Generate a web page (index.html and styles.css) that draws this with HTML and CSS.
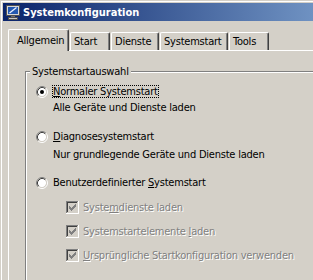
FILE: index.html
```html
<!DOCTYPE html>
<html lang="de">
<head>
<meta charset="utf-8">
<title>Systemkonfiguration</title>
<link rel="stylesheet" href="styles.css">
</head>
<body>
<div class="window">
  <div class="titlebar">
    <svg class="app-icon" width="16" height="16" viewBox="0 0 16 16">
      <rect x="1.5" y="1.5" width="13" height="10" fill="#d8d8d8" stroke="#505050"/>
      <rect x="3" y="3" width="10" height="7" fill="#2358b0"/>
      <path d="M4.5 9 L11.5 3.5" stroke="#e8f0ff" stroke-width="1.3"/>
      <rect x="6" y="12" width="4" height="1" fill="#707070"/>
      <rect x="3.5" y="13.5" width="9" height="2" fill="#c8c8c8" stroke="#505050"/>
    </svg>
    <span class="title">Systemkonfiguration</span>
  </div>
  <div class="client">
    <div class="tabs">
      <div class="tab tab-allgemein is-active">Allgemein</div>
      <div class="tab tab-start">Start</div>
      <div class="tab tab-dienste">Dienste</div>
      <div class="tab tab-systemstart">Systemstart</div>
      <div class="tab tab-tools">Tools</div>
    </div>
    <div class="panel">
      <fieldset class="group">
        <legend class="group-title">Systemstartauswahl</legend>
        <div class="option option-normal">
          <svg class="radio" width="12" height="12" viewBox="0 0 12 12">
            <circle cx="6" cy="6" r="4.2" fill="#fff"/>
            <path d="M2.11 9.89A5.5 5.5 0 0 1 9.89 2.11" fill="none" stroke="#808080"/>
            <path d="M9.89 2.11A5.5 5.5 0 0 1 2.11 9.89" fill="none" stroke="#fff"/>
            <path d="M2.82 9.18A4.5 4.5 0 0 1 9.18 2.82" fill="none" stroke="#404040"/>
            <path d="M9.18 2.82A4.5 4.5 0 0 1 2.82 9.18" fill="none" stroke="#d4d0c8"/>
            <circle cx="6" cy="6" r="2" fill="#000"/>
          </svg>
          <span class="label is-focused"><u>N</u>ormaler Systemstart</span>
        </div>
        <div class="desc desc-normal">Alle Geräte und Dienste laden</div>
        <div class="option option-diag">
          <svg class="radio" width="12" height="12" viewBox="0 0 12 12">
            <circle cx="6" cy="6" r="4.2" fill="#fff"/>
            <path d="M2.11 9.89A5.5 5.5 0 0 1 9.89 2.11" fill="none" stroke="#808080"/>
            <path d="M9.89 2.11A5.5 5.5 0 0 1 2.11 9.89" fill="none" stroke="#fff"/>
            <path d="M2.82 9.18A4.5 4.5 0 0 1 9.18 2.82" fill="none" stroke="#404040"/>
            <path d="M9.18 2.82A4.5 4.5 0 0 1 2.82 9.18" fill="none" stroke="#d4d0c8"/>
          </svg>
          <span class="label"><u>D</u>iagnosesystemstart</span>
        </div>
        <div class="desc desc-diag">Nur grundlegende Geräte und Dienste laden</div>
        <div class="option option-custom">
          <svg class="radio" width="12" height="12" viewBox="0 0 12 12">
            <circle cx="6" cy="6" r="4.2" fill="#fff"/>
            <path d="M2.11 9.89A5.5 5.5 0 0 1 9.89 2.11" fill="none" stroke="#808080"/>
            <path d="M9.89 2.11A5.5 5.5 0 0 1 2.11 9.89" fill="none" stroke="#fff"/>
            <path d="M2.82 9.18A4.5 4.5 0 0 1 9.18 2.82" fill="none" stroke="#404040"/>
            <path d="M9.18 2.82A4.5 4.5 0 0 1 2.82 9.18" fill="none" stroke="#d4d0c8"/>
          </svg>
          <span class="label">Benutzerdefinierter <u>S</u>ystemstart</span>
        </div>
        <div class="check check-first">
          <svg class="checkbox" width="13" height="13" viewBox="0 0 13 13">
            <rect x="0" y="0" width="13" height="13" fill="#fff"/>
            <rect x="0" y="0" width="12" height="12" fill="#808080"/>
            <rect x="1" y="1" width="11" height="11" fill="#d4d0c8"/>
            <rect x="1" y="1" width="10" height="10" fill="#404040"/>
            <rect x="2" y="2" width="9" height="9" fill="#d4d0c8"/>
            <g fill="#808080">
              <rect x="9" y="3" width="1" height="1"/>
              <rect x="8" y="4" width="2" height="1"/>
              <rect x="3" y="5" width="1" height="1"/>
              <rect x="7" y="5" width="3" height="1"/>
              <rect x="3" y="6" width="2" height="1"/>
              <rect x="6" y="6" width="3" height="1"/>
              <rect x="3" y="7" width="5" height="1"/>
              <rect x="4" y="8" width="3" height="1"/>
              <rect x="5" y="9" width="1" height="1"/>
            </g>
          </svg>
          <span class="label is-disabled">Syste<u>m</u>dienste laden</span>
        </div>
        <div class="check">
          <svg class="checkbox" width="13" height="13" viewBox="0 0 13 13">
            <rect x="0" y="0" width="13" height="13" fill="#fff"/>
            <rect x="0" y="0" width="12" height="12" fill="#808080"/>
            <rect x="1" y="1" width="11" height="11" fill="#d4d0c8"/>
            <rect x="1" y="1" width="10" height="10" fill="#404040"/>
            <rect x="2" y="2" width="9" height="9" fill="#d4d0c8"/>
            <g fill="#808080">
              <rect x="9" y="3" width="1" height="1"/>
              <rect x="8" y="4" width="2" height="1"/>
              <rect x="3" y="5" width="1" height="1"/>
              <rect x="7" y="5" width="3" height="1"/>
              <rect x="3" y="6" width="2" height="1"/>
              <rect x="6" y="6" width="3" height="1"/>
              <rect x="3" y="7" width="5" height="1"/>
              <rect x="4" y="8" width="3" height="1"/>
              <rect x="5" y="9" width="1" height="1"/>
            </g>
          </svg>
          <span class="label is-disabled">Systemstartelemente <u>l</u>aden</span>
        </div>
        <div class="check">
          <svg class="checkbox" width="13" height="13" viewBox="0 0 13 13">
            <rect x="0" y="0" width="13" height="13" fill="#fff"/>
            <rect x="0" y="0" width="12" height="12" fill="#808080"/>
            <rect x="1" y="1" width="11" height="11" fill="#d4d0c8"/>
            <rect x="1" y="1" width="10" height="10" fill="#404040"/>
            <rect x="2" y="2" width="9" height="9" fill="#d4d0c8"/>
            <g fill="#808080">
              <rect x="9" y="3" width="1" height="1"/>
              <rect x="8" y="4" width="2" height="1"/>
              <rect x="3" y="5" width="1" height="1"/>
              <rect x="7" y="5" width="3" height="1"/>
              <rect x="3" y="6" width="2" height="1"/>
              <rect x="6" y="6" width="3" height="1"/>
              <rect x="3" y="7" width="5" height="1"/>
              <rect x="4" y="8" width="3" height="1"/>
              <rect x="5" y="9" width="1" height="1"/>
            </g>
          </svg>
          <span class="label is-disabled"><u>U</u>rsprüngliche Startkonfiguration verwenden</span>
        </div>
      </fieldset>
    </div>
  </div>
</div>
</body>
</html>
```

FILE: styles.css
```css
html, body {
  margin: 0;
  padding: 0;
  overflow: hidden;
  background: #d4d0c8;
}

body {
  width: 313px;
  height: 280px;
  font-family: "DejaVu Sans Condensed", "Liberation Sans", sans-serif;
  font-size: 11px;
  line-height: 13px;
  letter-spacing: -0.22px;
  color: #000;
}

/* window is cropped by the screenshot: only top and left frame edges show */
.window {
  width: 313px;
  height: 280px;
  box-sizing: border-box;
  display: flex;
  flex-direction: column;
  border-top: 1px solid #d4d0c8;
  border-left: 1px solid #d4d0c8;
  box-shadow: inset 1px 1px 0 #fff;
  padding: 2px 0 0 2px;
  background: #d4d0c8;
}

.titlebar {
  flex: none;
  height: 18px;
  display: flex;
  align-items: center;
  padding-left: 2px;
  background: linear-gradient(90deg, #0a246a 0px, #a6cef2 480px);
}

.app-icon {
  display: block;
  flex: none;
}

.title {
  margin-left: 2px;
  color: #fff;
  font-weight: bold;
  font-size: 11px;
  line-height: 13px;
  letter-spacing: 0;
}

.client {
  flex: 1;
  display: flex;
  flex-direction: column;
  padding: 8px 0 0 5px;
  min-height: 0;
}

.tabs {
  flex: none;
  display: flex;
  align-items: flex-end;
  gap: 1px;
  height: 21px;
}

.tab {
  box-sizing: border-box;
  height: 18px;
  padding: 2px 0 0 3px;
  border-top: 1px solid #fff;
  border-left: 1px solid #fff;
  border-right: 1px solid #404040;
  border-radius: 2px 2px 0 0;
  box-shadow: inset -1px 0 0 #808080;
  background: #d4d0c8;
  white-space: nowrap;
  line-height: 13px;
}

.tab.is-active {
  position: relative;
  z-index: 1;
  height: 22px;
  margin-bottom: -1px;
  padding: 4px 0 0 8px;
}

.tab-allgemein { width: 61px; }
.tab-start { width: 40px; }
.tab-dienste { width: 48px; }
.tab-systemstart { width: 68px; }
.tab-tools { width: 40px; }

.panel {
  flex: 1;
  display: flex;
  flex-direction: column;
  min-height: 0;
  border-top: 1px solid #fff;
  border-left: 1px solid #fff;
}

.group {
  flex: 1;
  box-sizing: border-box;
  margin: 14px 0 0 16px;
  padding: 0 0 0 4px;
  border: 1px solid #808080;
  border-right: none;
  border-bottom: none;
  box-shadow: inset 1px 1px 0 #fff;
  min-inline-size: 0;
  min-height: 0;
}

.group-title {
  padding: 0 2px;
  line-height: 13px;
  background: #d4d0c8;
}

.option,
.check {
  display: flex;
  align-items: center;
  height: 13px;
}

.option { margin-left: 6px; gap: 4px; }
.check { margin-left: 36px; gap: 3px; }

.radio,
.checkbox {
  display: block;
  flex: none;
}

.label {
  display: inline-block;
  border: 1px solid transparent;
  line-height: 11px;
  white-space: nowrap;
}

.label.is-focused {
  border: 1px dotted #000;
}

.label.is-disabled {
  color: #808080;
  text-shadow: 1px 1px 0 #fff;
}

.desc {
  margin-left: 23px;
  height: 13px;
  white-space: nowrap;
}

.option-normal { margin-top: 7px; }
.desc-normal { margin-top: 3px; }
.option-diag { margin-top: 16px; }
.desc-diag { margin-top: 5px; }
.option-custom { margin-top: 15px; }
.check-first { margin-top: 12px; }
.check + .check { margin-top: 11px; }
```
